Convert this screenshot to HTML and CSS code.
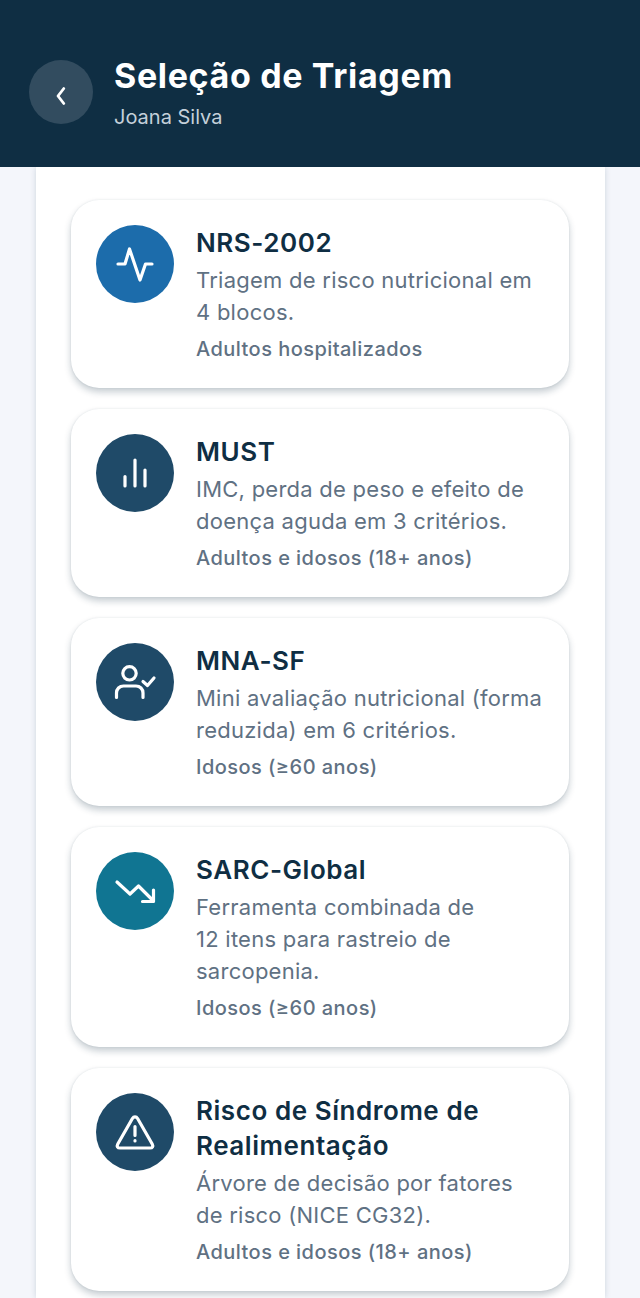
FILE: index.html
```html
<!DOCTYPE html>
<html lang="pt">
<head>
<meta charset="utf-8">
<title>Seleção de Triagem</title>
<link rel="stylesheet" href="styles.css">
</head>
<body>
<header class="top">
  <button class="back" aria-label="Voltar">
    <svg width="64" height="64" viewBox="0 0 64 64"><path d="M34.800 28.500 29 36l5.800 7.500" fill="none" stroke="#fff" stroke-width="2.800" stroke-linecap="round" stroke-linejoin="round"/></svg>
  </button>
  <div class="top-text">
    <h1 class="top-title">Seleção de Triagem</h1>
    <p class="top-sub">Joana Silva</p>
  </div>
</header>
<main class="panel">
  <article class="card">
    <div class="icon icon-blue">
      <svg class="glyph" viewBox="-39 -39 78 78"><path d="M-17 0h7l4.500-15L5 16 10.500 0H17" /></svg>
    </div>
    <div class="body">
      <h2 class="name">NRS-2002</h2>
      <p class="desc">Triagem de risco nutricional em<br>4 blocos.</p>
      <p class="tag">Adultos hospitalizados</p>
    </div>
  </article>
  <article class="card">
    <div class="icon icon-navy">
      <svg class="glyph" viewBox="-39 -39 78 78"><path d="M-10 3.500V13M0-13V13M10-3V13" /></svg>
    </div>
    <div class="body">
      <h2 class="name">MUST</h2>
      <p class="desc">IMC, perda de peso e efeito de<br>doença aguda em 3 critérios.</p>
      <p class="tag">Adultos e idosos (18+ anos)</p>
    </div>
  </article>
  <article class="card">
    <div class="icon icon-navy">
      <svg class="glyph" viewBox="-39 -39 78 78"><circle cx="-5.500" cy="-8.700" r="6.700"/><path d="M-18.500 15.500V11c0-4 3-7 7-7H1c4 0 7 3 7 7v4.500M8-.5l4.500 4 6.500-7.500"/></svg>
    </div>
    <div class="body">
      <h2 class="name">MNA-SF</h2>
      <p class="desc">Mini avaliação nutricional (forma<br>reduzida) em 6 critérios.</p>
      <p class="tag">Idosos (≥60 anos)</p>
    </div>
  </article>
  <article class="card">
    <div class="icon icon-teal">
      <svg class="glyph" viewBox="-39 -39 78 78"><path d="M-18-9-5 3 3.500-5 18.500 10M18.500-1V10.500H7.500"/></svg>
    </div>
    <div class="body">
      <h2 class="name">SARC-Global</h2>
      <p class="desc">Ferramenta combinada de<br>12 itens para rastreio de<br>sarcopenia.</p>
      <p class="tag">Idosos (≥60 anos)</p>
    </div>
  </article>
  <article class="card">
    <div class="icon icon-navy">
      <svg class="glyph" viewBox="-39 -39 78 78"><path d="M-2.600-13.500-17.200 12C-18.500 14.500-17.500 16-15 16H15C17.500 16 18.500 14.500 17.200 12L2.600-13.500C1.200-15.800-1.200-15.800-2.600-13.500ZM0-5.500V3.500M0 8.700V9"/></svg>
    </div>
    <div class="body">
      <h2 class="name">Risco de Síndrome de<br>Realimentação</h2>
      <p class="desc">Árvore de decisão por fatores<br>de risco (NICE CG32).</p>
      <p class="tag">Adultos e idosos (18+ anos)</p>
    </div>
  </article>
</main>
</body>
</html>
```
FILE: styles.css
```css
* { box-sizing: border-box; }
html, body { margin: 0; padding: 0; }
body {
  height: 1298px;
  overflow: hidden;
  background: #f4f6fb;
  font-family: "Inter", "Noto Sans", sans-serif;
}
.top {
  height: 167px;
  background: #0f2e43;
  display: flex;
  align-items: flex-start;
  gap: 21px;
  padding: 56px 29px 0;
  position: relative;
  z-index: 2;
}
.back {
  width: 64px;
  height: 64px;
  margin-top: 4px;
  border: 0;
  padding: 0;
  border-radius: 50%;
  background: #324c5f;
  display: flex;
  align-items: center;
  justify-content: center;
  flex: none;
}
.top-title {
  margin: 0;
  color: #fff;
  font-size: 34px;
  line-height: 40px;
  font-weight: 700;
  letter-spacing: 0.65px;
}
.top-sub {
  margin: 8px 0 0;
  color: #c4d0da;
  font-size: 20px;
  line-height: 26px;
  font-weight: 400;
}
.panel {
  width: 569px;
  margin-left: 36px;
  padding: 33px 36px 0 35px;
  background: #fff;
  box-shadow: 0 0 6px rgba(15, 46, 67, 0.16);
  display: flex;
  flex-direction: column;
  gap: 21px;
  min-height: 1131px;
}
.card {
  background: #fff;
  border-radius: 28px;
  padding: 25px 25px 24px;
  display: flex;
  gap: 22px;
  box-shadow: 0 4px 7px rgba(15, 46, 67, 0.24), 0 0 2px rgba(15, 46, 67, 0.1);
}
.icon {
  width: 78px;
  height: 78px;
  border-radius: 50%;
  flex: none;
}
.icon-blue { background: #1c6cab; }
.icon-navy { background: #1f4a68; }
.icon-teal { background: #107592; }
.glyph {
  display: block;
  width: 78px;
  height: 78px;
  fill: none;
  stroke: #fff;
  stroke-width: 3.2;
  stroke-linecap: round;
  stroke-linejoin: round;
}
.name {
  margin: 0;
  color: #0f2e43;
  font-size: 26px;
  line-height: 35px;
  font-weight: 600;
  letter-spacing: 0.55px;
}
.desc {
  margin: 4px 0 0;
  color: #5f7183;
  font-size: 22px;
  line-height: 32px;
  white-space: nowrap;
  letter-spacing: 0.25px;
}
.tag {
  margin: 6px 0 0;
  color: #5f7183;
  font-size: 20px;
  line-height: 30px;
  font-weight: 450;
  letter-spacing: 0.45px;
  white-space: nowrap;
}
```
